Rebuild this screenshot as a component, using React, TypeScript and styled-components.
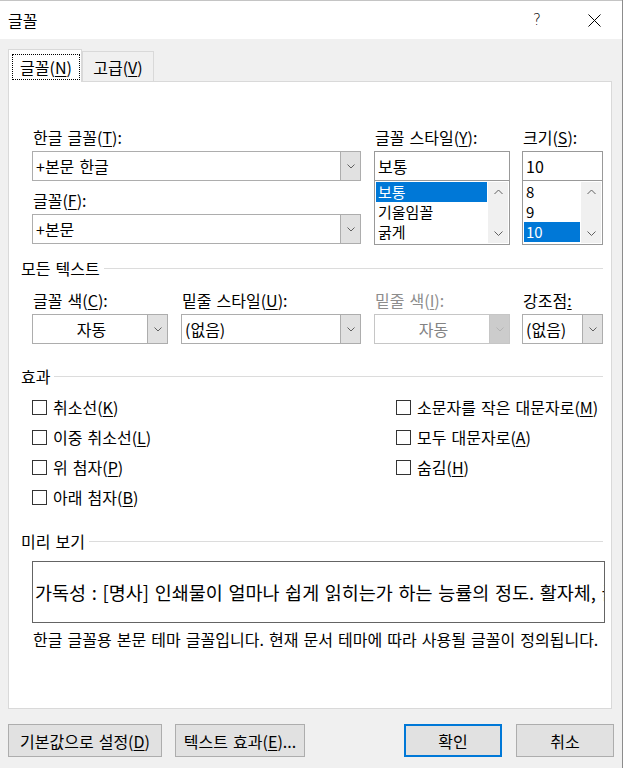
import React from 'react';
import styled, { createGlobalStyle } from 'styled-components';

const GlobalStyle = createGlobalStyle`
  html, body {
    margin: 0;
    padding: 0;
    background: #ffffff;
  }
  body {
    font-family: "Noto Sans CJK KR", "Noto Sans", sans-serif;
  }
  * {
    box-sizing: border-box;
  }
`;

const Dialog = styled.div`
  width: 623px;
  height: 768px;
  background: #f0f0f0;
  border-right: 1px solid #8c8c8c;
  display: flex;
  flex-direction: column;
  font-size: 16px;
  word-spacing: 1.5px;
  color: #000;
`;

const TitleBar = styled.div`
  height: 39px;
  background: #ffffff;
  border-top: 1px solid #c4c4c4;
  display: flex;
  align-items: center;
  padding: 0 5px 0 8px;
`;

const Title = styled.div`
  flex: 1;
  line-height: 20px;
`;

const TitleButton = styled.div`
  width: 46px;
  height: 38px;
  display: flex;
  align-items: center;
  justify-content: center;
  font-family: "DejaVu Sans", sans-serif;
  font-weight: 300;
  font-size: 15px;
`;

const HelpSpacer = styled.div`
  width: 11px;
`;

const TabStrip = styled.div`
  margin-top: 10px;
  padding-left: 8px;
  display: flex;
  align-items: flex-end;
  height: 32px;
`;

const Tab = styled.div<{ $active?: boolean }>`
  position: relative;
  z-index: 1;
  width: ${p => (p.$active ? '74px' : '72px')};
  height: ${p => (p.$active ? '33px' : '30px')};
  margin-bottom: ${p => (p.$active ? '-1px' : '0')};
  background: ${p => (p.$active ? '#ffffff' : '#f0f0f0')};
  border: 1px solid #d9d9d9;
  border-bottom: none;
  padding: ${p => (p.$active ? '4px 1px 0 3px' : '0')};
  display: flex;
  align-items: ${p => (p.$active ? 'flex-start' : 'center')};
  justify-content: center;
  line-height: 20px;
`;

const FocusRing = styled.div`
  width: 100%;
  height: 26px;
  border: 1px dotted #000;
  display: flex;
  align-items: center;
  justify-content: center;
`;

const Panel = styled.div`
  margin: 0 10px 0 8px;
  height: 628px;
  background: #ffffff;
  border: 1px solid #d9d9d9;
  padding: 45px 8px 0 12px;
  display: flex;
  flex-direction: column;
`;

const Indented = styled.div<{ $top?: number }>`
  margin-left: 11px;
  margin-top: ${p => p.$top || 0}px;
  display: flex;
`;

const Column = styled.div<{ $width: number; $gap?: number }>`
  width: ${p => p.$width}px;
  margin-left: ${p => p.$gap || 0}px;
  display: flex;
  flex-direction: column;
`;

const Label = styled.div<{ $top?: number; $disabled?: boolean }>`
  height: 20px;
  line-height: 20px;
  margin-top: ${p => p.$top || 0}px;
  margin-bottom: 3px;
  padding-left: 1px;
  white-space: nowrap;
  color: ${p => (p.$disabled ? '#8d8d8d' : '#000')};
`;

const Key = styled.u`
  text-underline-offset: 2px;
`;

const ComboBox = styled.div<{ $disabled?: boolean }>`
  height: 30px;
  margin-top: 1px;
  border: 1px solid ${p => (p.$disabled ? '#c6c6c6' : '#adadad')};
  background: #ffffff;
  display: flex;
  color: ${p => (p.$disabled ? '#838383' : '#000')};
`;

const ComboText = styled.div<{ $center?: boolean }>`
  flex: 1;
  line-height: 28px;
  padding-left: 3px;
  text-align: ${p => (p.$center ? 'center' : 'left')};
  white-space: nowrap;
  overflow: hidden;
`;

const ComboButton = styled.div<{ $disabled?: boolean }>`
  width: 20px;
  background: ${p => (p.$disabled ? '#cccccc' : '#e1e1e1')};
  border-left: 1px solid ${p => (p.$disabled ? '#c6c6c6' : '#adadad')};
  display: flex;
  align-items: center;
  justify-content: center;
`;

const TextField = styled.div`
  height: 30px;
  margin-top: 1px;
  border: 1px solid #999999;
  line-height: 28px;
  padding-left: 3px;
`;

const ListBox = styled.div`
  height: 64px;
  border: 1px solid #999999;
  border-top: none;
  padding: 1px;
  display: flex;
`;

const ListItems = styled.div`
  flex: 1;
  display: flex;
  flex-direction: column;
`;

const ListItem = styled.div<{ $selected?: boolean }>`
  height: 20px;
  line-height: 20px;
  font-size: 15px;
  padding-left: 2px;
  background: ${p => (p.$selected ? '#0078d7' : 'transparent')};
  color: ${p => (p.$selected ? '#ffffff' : '#000')};
  white-space: nowrap;
`;

const ScrollBar = styled.div`
  width: 20px;
  margin-left: 1px;
  background: #f0f0f0;
  display: flex;
  flex-direction: column;
  justify-content: space-between;
  align-items: center;
  padding: 7px 0;
`;

const SectionHeader = styled.div<{ $top: number }>`
  margin-top: ${p => p.$top}px;
  height: 20px;
  line-height: 20px;
  display: flex;
  align-items: center;
  white-space: nowrap;

  &::after {
    content: '';
    flex: 1;
    height: 1px;
    margin-left: 4px;
    background: #dcdcdc;
  }
`;

const CheckGrid = styled.div`
  margin: 6px 0 0 11px;
  display: grid;
  grid-template-columns: 364px 1fr;
  grid-template-rows: repeat(4, 30px);
  grid-auto-flow: column;
`;

const CheckRow = styled.div`
  display: flex;
  align-items: center;
  line-height: 20px;
  white-space: nowrap;
`;

const CheckBox = styled.span`
  width: 15px;
  height: 15px;
  border: 1px solid #333333;
  background: #ffffff;
  margin-right: 6px;
`;

const PreviewBox = styled.div`
  margin: 10px 0 0 11px;
  width: 573px;
  height: 62px;
  border: 1px solid #646464;
  background: #ffffff;
  display: flex;
  align-items: center;
  padding-left: 2px;
  overflow: hidden;
  white-space: nowrap;
  font-size: 18.5px;
  word-spacing: 1.5px;
`;

const Description = styled.div`
  margin: 6px 0 0 12px;
  line-height: 20px;
  white-space: nowrap;
`;

const ButtonRow = styled.div`
  margin-top: 15px;
  padding: 0 8px;
  display: flex;
`;

const Button = styled.div<{ $width: number; $gap?: number; $default?: boolean }>`
  width: ${p => p.$width}px;
  height: 33px;
  margin-left: ${p => p.$gap || 0}px;
  background: #e1e1e1;
  border: ${p => (p.$default ? '2px solid #0078d7' : '1px solid #adadad')};
  display: flex;
  align-items: center;
  justify-content: center;
  white-space: nowrap;
`;

const Spacer = styled.div`
  flex: 1;
`;

const Chevron: React.FC<{ up?: boolean; color?: string; size?: number }> = ({ up, color = '#606060', size = 8 }) => (
  <svg width={size} height={size / 2 + 1} viewBox={`0 0 ${size} ${size / 2 + 1}`}>
    <polyline
      points={up ? `0.5,${size / 2 + 0.5} ${size / 2},1 ${size - 0.5},${size / 2 + 0.5}` : `0.5,0.5 ${size / 2},${size / 2} ${size - 0.5},0.5`}
      fill="none"
      stroke={color}
      strokeWidth="1"
    />
  </svg>
);

const CloseIcon = () => (
  <svg width="13" height="13" viewBox="0 0 13 13">
    <path d="M0.5 0.5 L12.5 12.5 M12.5 0.5 L0.5 12.5" stroke="#000" strokeWidth="1" />
  </svg>
);

const Combo: React.FC<{ text: string; center?: boolean; disabled?: boolean }> = ({ text, center, disabled }) => (
  <ComboBox $disabled={disabled}>
    <ComboText $center={center}>{text}</ComboText>
    <ComboButton $disabled={disabled}>
      <Chevron color={disabled ? '#b4b4b4' : '#606060'} />
    </ComboButton>
  </ComboBox>
);

const List: React.FC<{ items: string[]; selected: number }> = ({ items, selected }) => (
  <ListBox>
    <ListItems>
      {items.map((it, i) => (
        <ListItem key={it} $selected={i === selected}>{it}</ListItem>
      ))}
    </ListItems>
    <ScrollBar>
      <Chevron up size={9} />
      <Chevron size={9} />
    </ScrollBar>
  </ListBox>
);

const Check: React.FC<{ label: string; k: string }> = ({ label, k }) => (
  <CheckRow>
    <CheckBox />
    {label}(<Key>{k}</Key>)
  </CheckRow>
);

export default function App() {
  return (
    <>
      <GlobalStyle />
      <Dialog>
        <TitleBar>
          <Title>글꼴</Title>
          <TitleButton>?</TitleButton>
          <HelpSpacer />
          <TitleButton><CloseIcon /></TitleButton>
        </TitleBar>

        <TabStrip>
          <Tab $active>
            <FocusRing>글꼴(<Key>N</Key>)</FocusRing>
          </Tab>
          <Tab>고급(<Key>V</Key>)</Tab>
        </TabStrip>

        <Panel>
          <Indented>
            <Column $width={329}>
              <Label>한글 글꼴(<Key>T</Key>):</Label>
              <Combo text="+본문 한글" />
              <Label $top={9}>글꼴(<Key>F</Key>):</Label>
              <Combo text="+본문" />
            </Column>
            <Column $width={136} $gap={13}>
              <Label>글꼴 스타일(<Key>Y</Key>):</Label>
              <TextField>보통</TextField>
              <List items={['보통', '기울임꼴', '굵게']} selected={0} />
            </Column>
            <Column $width={81} $gap={12}>
              <Label>크기(<Key>S</Key>):</Label>
              <TextField>10</TextField>
              <List items={['8', '9', '10']} selected={2} />
            </Column>
          </Indented>

          <SectionHeader $top={13}>모든 텍스트</SectionHeader>
          <Indented $top={12}>
            <Column $width={136}>
              <Label>글꼴 색(<Key>C</Key>):</Label>
              <Combo text="자동" center />
            </Column>
            <Column $width={180} $gap={13}>
              <Label>밑줄 스타일(<Key>U</Key>):</Label>
              <Combo text="(없음)" />
            </Column>
            <Column $width={136} $gap={13}>
              <Label $disabled>밑줄 색(<Key>I</Key>):</Label>
              <Combo text="자동" center disabled />
            </Column>
            <Column $width={81} $gap={12}>
              <Label>강조점<Key>:</Key></Label>
              <Combo text="(없음)" />
            </Column>
          </Indented>

          <SectionHeader $top={22}>효과</SectionHeader>
          <CheckGrid>
            <Check label="취소선" k="K" />
            <Check label="이중 취소선" k="L" />
            <Check label="위 첨자" k="P" />
            <Check label="아래 첨자" k="B" />
            <Check label="소문자를 작은 대문자로" k="M" />
            <Check label="모두 대문자로" k="A" />
            <Check label="숨김" k="H" />
          </CheckGrid>

          <SectionHeader $top={19}>미리 보기</SectionHeader>
          <PreviewBox>
            가독성 : [명사] 인쇄물이 얼마나 쉽게 읽히는가 하는 능률의 정도. 활자체, 글자 크기, 행간 등에 따라 달라진다.
          </PreviewBox>
          <Description>
            한글 글꼴용 본문 테마 글꼴입니다. 현재 문서 테마에 따라 사용될 글꼴이 정의됩니다.
          </Description>
        </Panel>

        <ButtonRow>
          <Button $width={154}>기본값으로 설정(<Key>D</Key>)</Button>
          <Button $width={130} $gap={13}>텍스트 효과(<Key>E</Key>)...</Button>
          <Spacer />
          <Button $width={98} $default>확인</Button>
          <Button $width={98} $gap={14}>취소</Button>
        </ButtonRow>
      </Dialog>
    </>
  );
}
